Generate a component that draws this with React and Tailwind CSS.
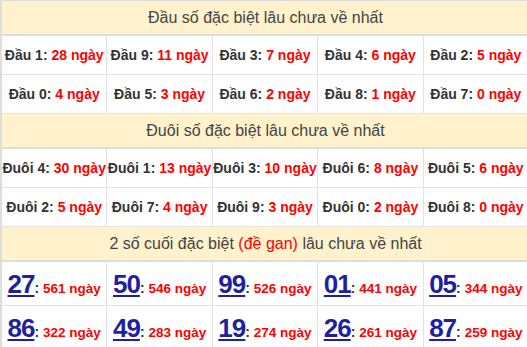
import React from "react";

const font = { fontFamily: '"Liberation Sans", Arial, sans-serif' };

const dau = [
  [["Đầu 1", "28"], ["Đầu 9", "11"], ["Đầu 3", "7"], ["Đầu 4", "6"], ["Đầu 2", "5"]],
  [["Đầu 0", "4"], ["Đầu 5", "3"], ["Đầu 6", "2"], ["Đầu 8", "1"], ["Đầu 7", "0"]],
];

const duoi = [
  [["Đuôi 4", "30"], ["Đuôi 1", "13"], ["Đuôi 3", "10"], ["Đuôi 6", "8"], ["Đuôi 5", "6"]],
  [["Đuôi 2", "5"], ["Đuôi 7", "4"], ["Đuôi 9", "3"], ["Đuôi 0", "2"], ["Đuôi 8", "0"]],
];

const gan = [
  [["27", "561"], ["50", "546"], ["99", "526"], ["01", "441"], ["05", "344"]],
  [["86", "322"], ["49", "283"], ["19", "274"], ["26", "261"], ["87", "259"]],
];

function Header({ children }) {
  return (
    <div className="h-[35px] bg-[#fff2cc] border-b-2 border-[#dddddd] flex items-center justify-center text-[16px] text-[#444444]">
      {children}
    </div>
  );
}

function LabelRow({ row }) {
  return (
    <div className="grid grid-cols-5 h-[39px] border-b border-[#e3e3e3]">
      {row.map(([label, days]) => (
        <div
          key={label}
          className="border-r border-[#e3e3e3] flex items-center justify-center whitespace-nowrap text-[14px] font-bold text-[#333333]"
        >
          {label}:&nbsp;<span className="text-[#ff0000]">{days} ngày</span>
        </div>
      ))}
    </div>
  );
}

function GanRow({ row }) {
  return (
    <div className="grid grid-cols-5 h-[44px] border-b border-[#e3e3e3]">
      {row.map(([num, days]) => (
        <div
          key={num}
          className="border-r border-[#e3e3e3] flex items-center justify-center whitespace-nowrap font-bold"
        >
          <span className="leading-none pt-[1px]">
            <a className="text-[26px] tracking-[-1px] text-[#1f1fa3] underline decoration-2 underline-offset-2">
              {num}
            </a>
            <span className="text-[14px] text-[#333333]">:&nbsp;</span>
            <span className="text-[13.5px] text-[#ff0000]">{days} ngày</span>
          </span>
        </div>
      ))}
    </div>
  );
}

export default function App() {
  return (
    <div className="w-[527px] h-[347px] overflow-hidden bg-white" style={font}>
      <div className="w-[529px] border-l-2 border-t border-[#dddddd]">
        <Header>Đầu số đặc biệt lâu chưa về nhất</Header>
        {dau.map((row, i) => (
          <LabelRow key={i} row={row} />
        ))}
        <Header>Đuôi số đặc biệt lâu chưa về nhất</Header>
        {duoi.map((row, i) => (
          <LabelRow key={i} row={row} />
        ))}
        <Header>
          2 số cuối đặc biệt&nbsp;<span className="text-[#ff0000]">(đề gan)</span>&nbsp;lâu chưa về nhất
        </Header>
        {gan.map((row, i) => (
          <GanRow key={i} row={row} />
        ))}
      </div>
    </div>
  );
}
